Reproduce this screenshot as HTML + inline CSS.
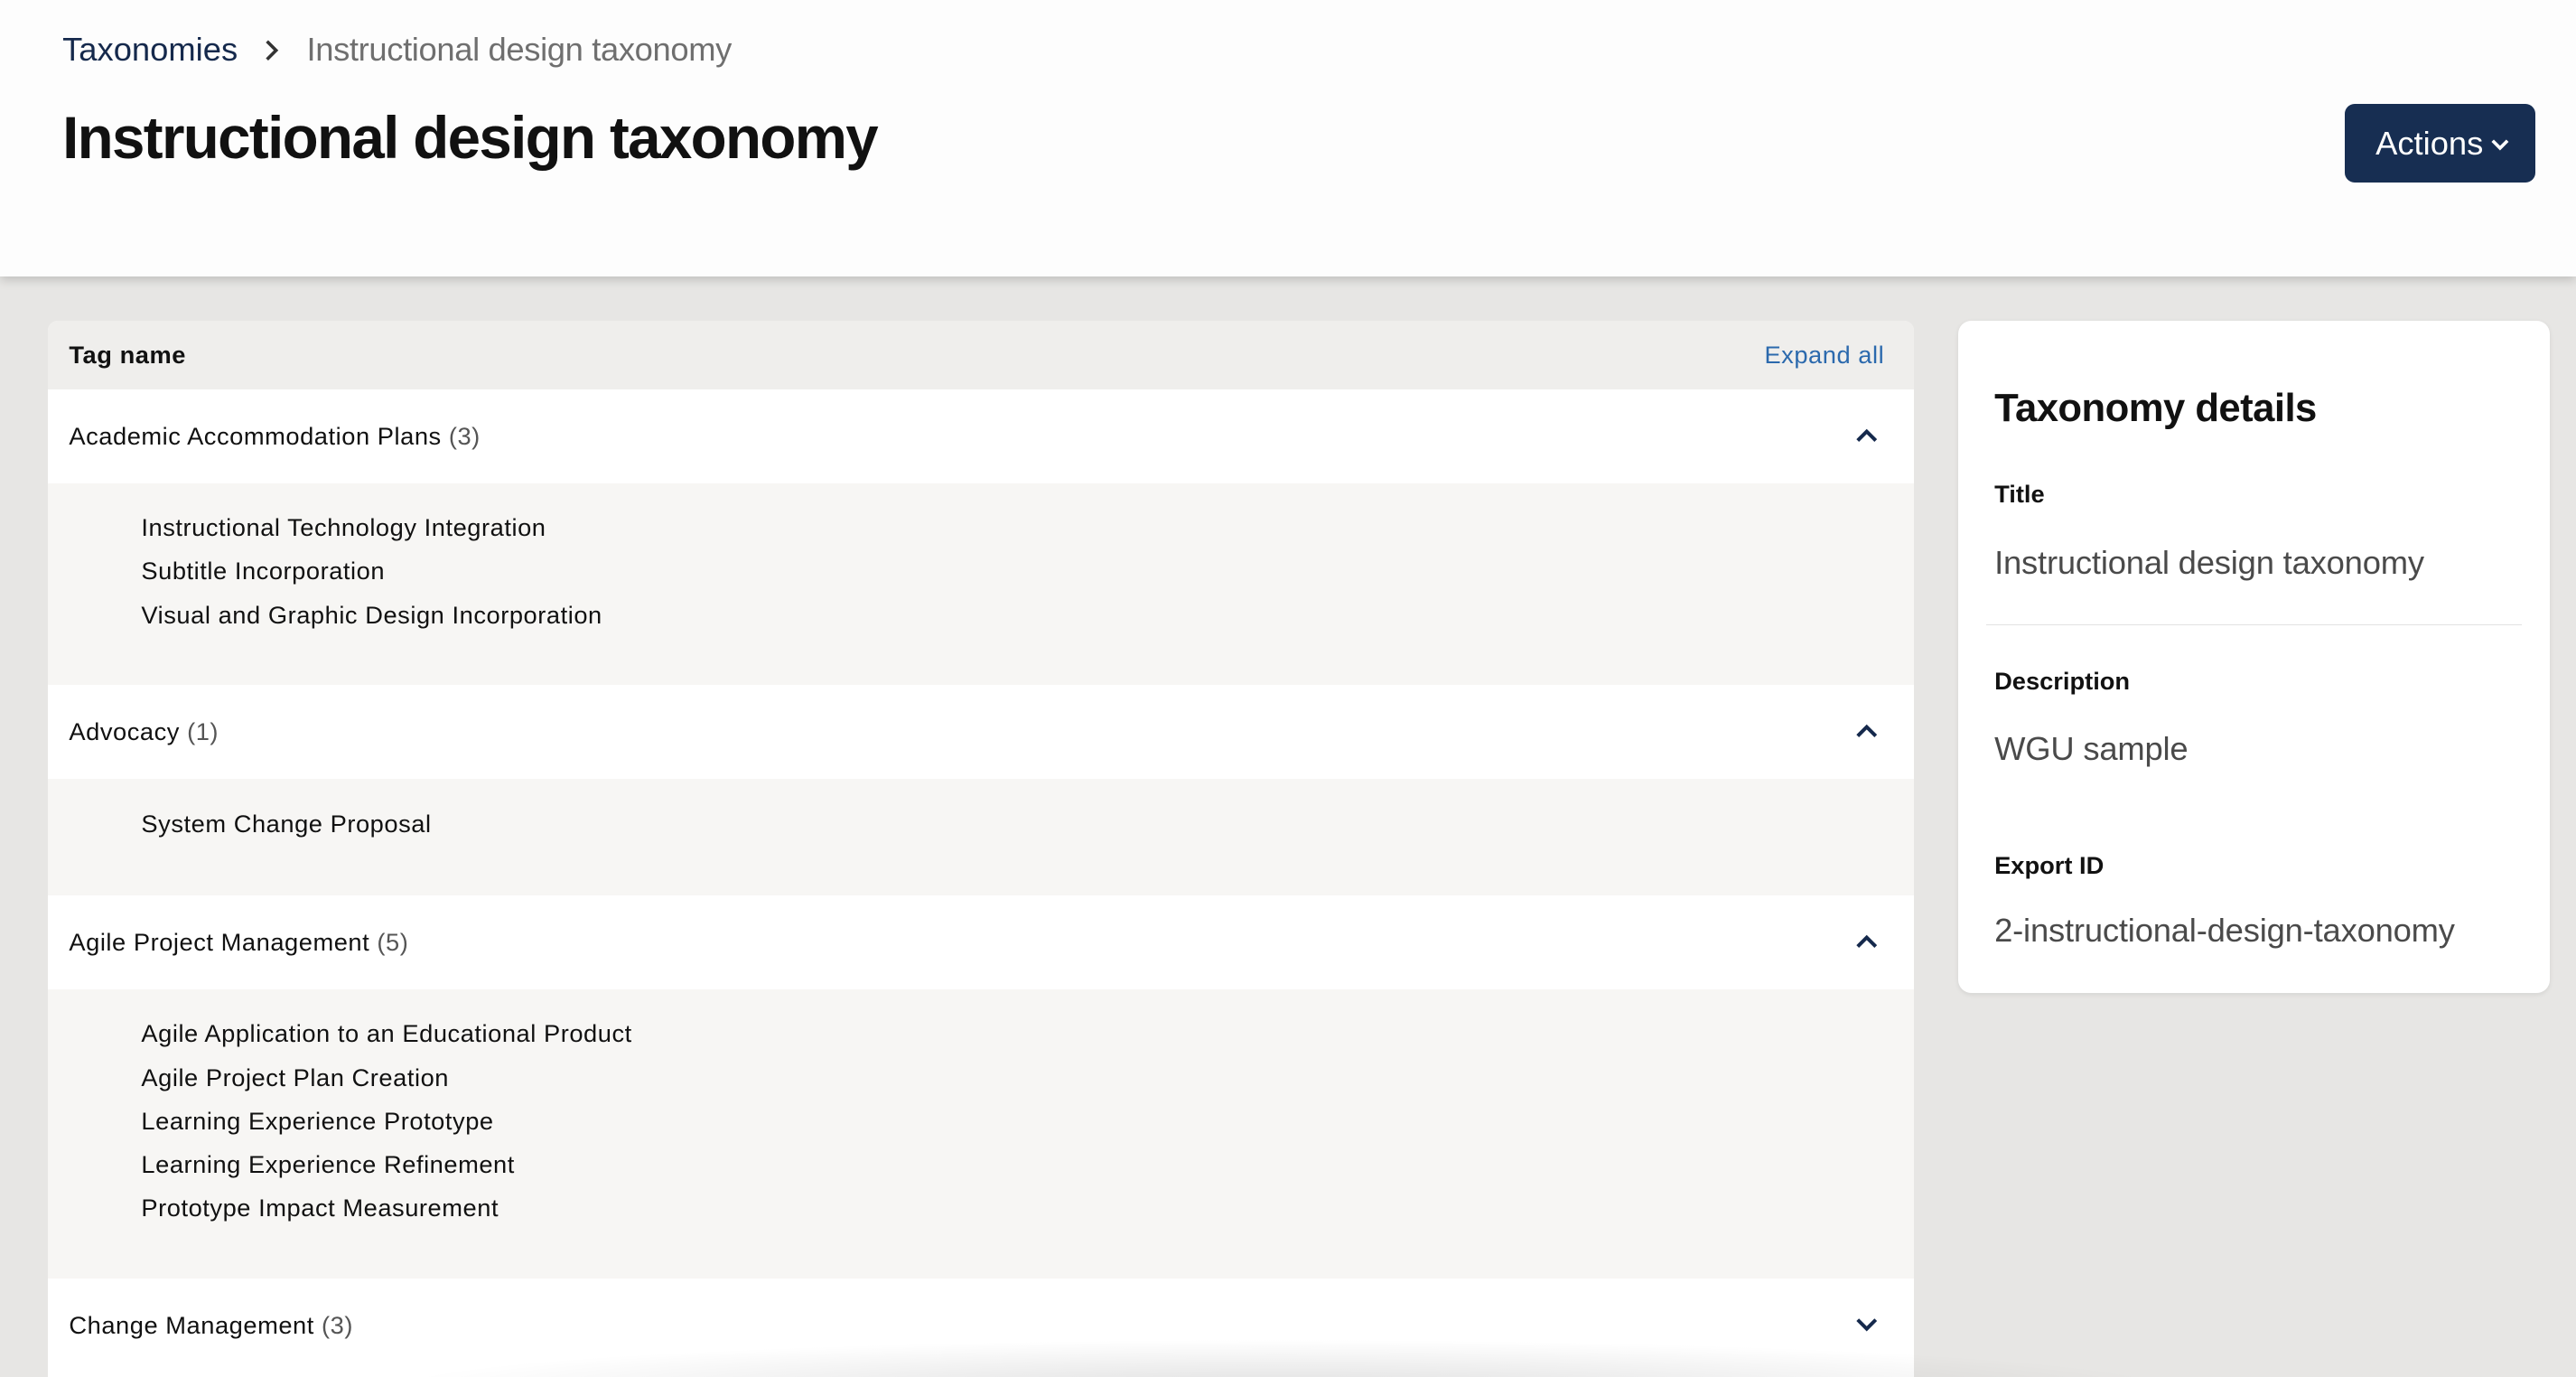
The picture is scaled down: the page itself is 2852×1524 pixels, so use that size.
<!DOCTYPE html>
<html><head><meta charset="utf-8"><style>
*{box-sizing:border-box;margin:0;padding:0}
html,body{width:2852px;height:1524px;overflow:hidden;background:#e7e6e4}
#z{zoom:1.818878;width:1568px;height:838px;position:relative;font-family:"Liberation Sans",Arial,sans-serif;color:#111}
.hdr{position:absolute;left:0;top:0;width:1568px;height:168px;background:#fdfdfd;box-shadow:0 2px 6px rgba(0,0,0,.18)}
.bc{position:absolute;left:38px;top:18px;font-size:20px;line-height:24px;white-space:nowrap}
.bc .a{color:#15294c}.bc .c{color:#6f6f6f;margin-left:16px;letter-spacing:-.2px}
.bc svg{margin-left:16px;vertical-align:-1px}
h1{position:absolute;left:38px;top:62px;font-size:36px;font-weight:700;letter-spacing:-.9px;line-height:44px}
.btn{position:absolute;left:1427px;top:63px;width:116px;height:48px;background:#172e52;border-radius:6px;color:#fff;font-size:20px;line-height:48px;padding-left:19px}
.btn svg{position:absolute;left:89px;top:21px}
.card{position:absolute;left:29px;top:195px;width:1136px;height:660px;background:#fff;border-radius:6px 6px 0 0;overflow:hidden;letter-spacing:.3px}
.th{height:42px;background:#efeeec;font-size:15px;font-weight:700;line-height:42px;padding-left:13px;position:relative}
.th span{position:absolute;right:18px;font-weight:400;color:#2b69ad}
.row{height:57px;line-height:57px;font-size:15px;padding-left:13px;position:relative;background:#fff}
.row .n{color:#555}
.row svg{position:absolute;left:1100px;top:23px}
.kids{background:#f7f6f4;padding:14px 0 0 57px;font-size:15px;line-height:26.5px}
.side{position:absolute;left:1192px;top:195px;width:360px;height:409px;background:#fff;border-radius:8px;box-shadow:0 1px 3px rgba(0,0,0,.08);padding-left:22px}
.lab{position:absolute;left:22px;font-size:15px;font-weight:700}
.val{position:absolute;left:22px;font-size:20px;color:#4a4a4a;letter-spacing:-.1px}
.hr{position:absolute;left:17px;width:326px;top:185px;border-top:1px solid #e2e2e2}
.fade{position:absolute;left:230px;top:815px;width:1100px;height:30px;background:radial-gradient(ellipse at 50% 100%,rgba(0,0,0,.12),rgba(0,0,0,0) 70%)}
</style></head><body><div id="z">
<div class="hdr">
<div class="bc"><span class="a">Taxonomies</span><svg width="10" height="14" viewBox="0 0 10 14"><path d="M2 1.5 L7.5 7 L2 12.5" stroke="#333" stroke-width="2" fill="none"/></svg><span class="c">Instructional design taxonomy</span></div>
<h1>Instructional design taxonomy</h1>
<div class="btn">Actions<svg width="12" height="8" viewBox="0 0 12 8"><path d="M1.5 1.5 L6 6 L10.5 1.5" stroke="#fff" stroke-width="2" fill="none"/></svg></div>
</div>
<div class="card">
<div class="th">Tag name<span>Expand all</span></div>
<div class="row">Academic Accommodation Plans <span class="n">(3)</span><svg width="14" height="10" viewBox="0 0 14 10"><path d="M1.5 8 L7 2.5 L12.5 8" stroke="#15294c" stroke-width="2.2" fill="none"/></svg></div>
<div class="kids" style="height:123px">Instructional Technology Integration<br>Subtitle Incorporation<br>Visual and Graphic Design Incorporation</div>
<div class="row">Advocacy <span class="n">(1)</span><svg width="14" height="10" viewBox="0 0 14 10"><path d="M1.5 8 L7 2.5 L12.5 8" stroke="#15294c" stroke-width="2.2" fill="none"/></svg></div>
<div class="kids" style="height:71px">System Change Proposal</div>
<div class="row">Agile Project Management <span class="n">(5)</span><svg width="14" height="10" viewBox="0 0 14 10"><path d="M1.5 8 L7 2.5 L12.5 8" stroke="#15294c" stroke-width="2.2" fill="none"/></svg></div>
<div class="kids" style="height:176px">Agile Application to an Educational Product<br>Agile Project Plan Creation<br>Learning Experience Prototype<br>Learning Experience Refinement<br>Prototype Impact Measurement</div>
<div class="row">Change Management <span class="n">(3)</span><svg width="14" height="10" viewBox="0 0 14 10"><path d="M1.5 2 L7 7.5 L12.5 2" stroke="#15294c" stroke-width="2.2" fill="none"/></svg></div>
</div>
<div class="side">
<h2 style="top:40px;position:absolute;left:22px;font-size:24px;letter-spacing:-.3px">Taxonomy details</h2>
<div class="lab" style="top:97px">Title</div>
<div class="val" style="top:136px">Instructional design taxonomy</div>
<div class="hr"></div>
<div class="lab" style="top:211px">Description</div>
<div class="val" style="top:249px">WGU sample</div>
<div class="lab" style="top:323px">Export ID</div>
<div class="val" style="top:360px">2-instructional-design-taxonomy</div>
</div>
<div class="fade"></div>
</div></body></html>
